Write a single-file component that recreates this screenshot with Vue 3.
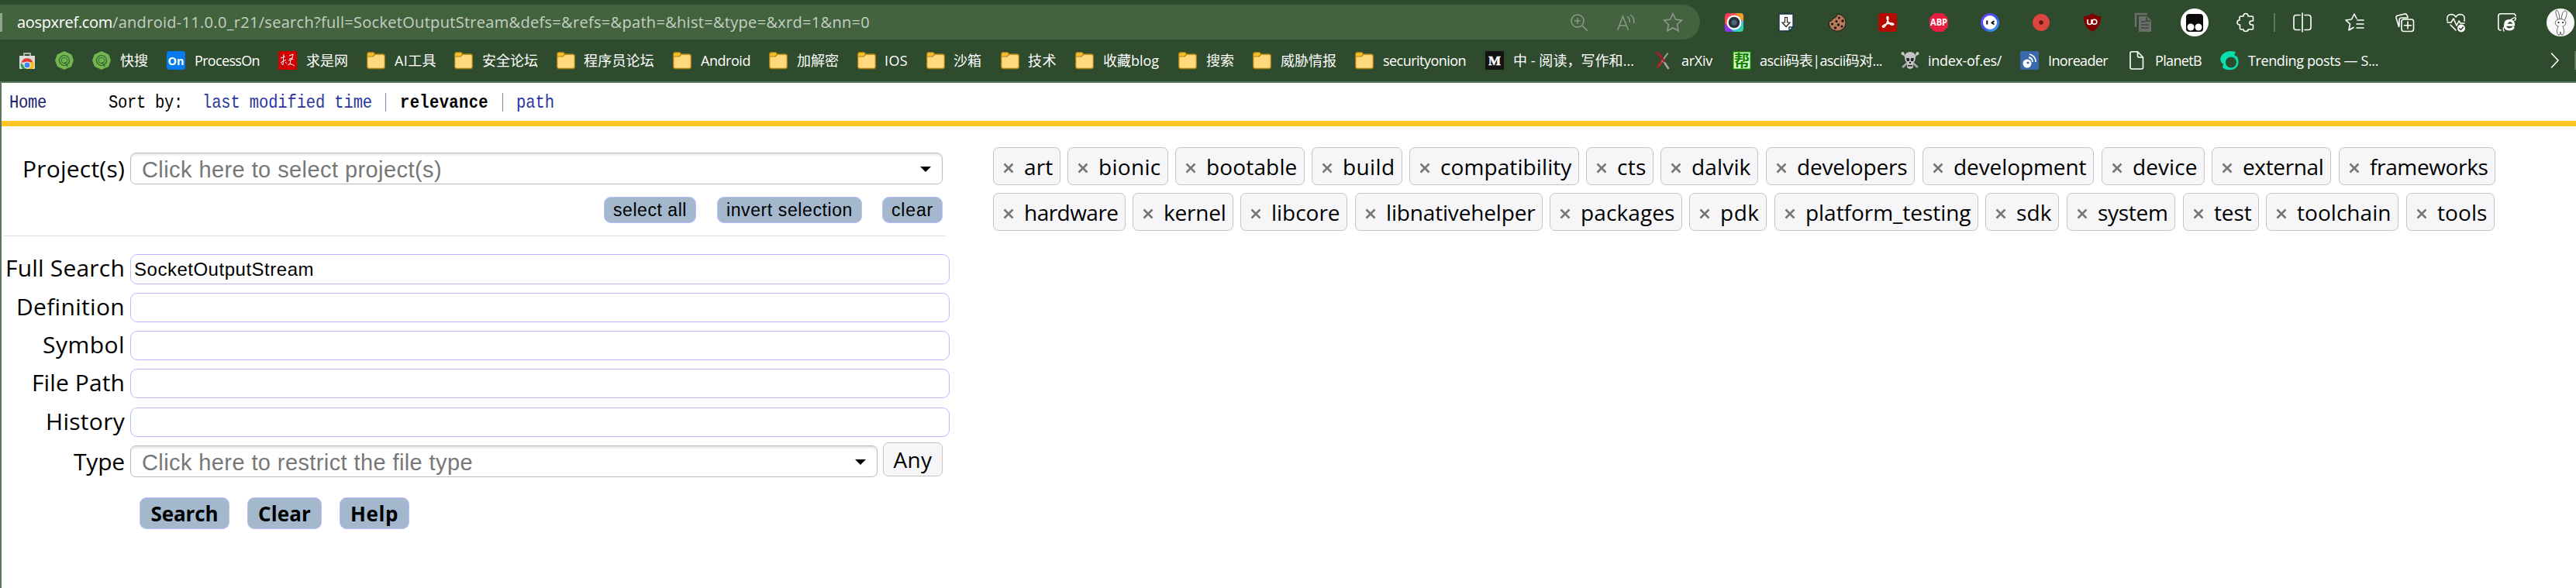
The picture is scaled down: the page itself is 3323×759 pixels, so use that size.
<script setup>
// Spreads the letters of a label so that it takes exactly the given width.
const vFit = {
  mounted(el, { value }) {
    const natural = el.getBoundingClientRect().width
    const count = el.textContent.trim().length
    el.style.letterSpacing = (value - natural) / count + 'px'
  },
}

// icon, x, icon width, label, label x, label width
const bookmarks = [
  ['store', 23, 24, '', 0, 0],
  ['green', 71, 24, '', 0, 0],
  ['green', 119, 24, '快搜', 155, 36],
  ['on', 215, 24, 'ProcessOn', 251, 84],
  ['qiushi', 359, 24, '求是网', 395, 54],
  ['folder', 473, 24, 'AI工具', 509, 54],
  ['folder', 586, 24, '安全论坛', 622, 72],
  ['folder', 718, 24, '程序员论坛', 753, 91],
  ['folder', 868, 24, 'Android', 904, 64],
  ['folder', 992, 24, '加解密', 1028, 54],
  ['folder', 1106, 24, 'IOS', 1141, 30],
  ['folder', 1195, 24, '沙箱', 1230, 36],
  ['folder', 1291, 24, '技术', 1326, 37],
  ['folder', 1387, 24, '收藏blog', 1423, 72],
  ['folder', 1520, 24, '搜索', 1556, 36],
  ['folder', 1616, 24, '威胁情报', 1652, 72],
  ['folder', 1748, 24, 'securityonion', 1784, 107],
  ['medium', 1916, 24, '中 - 阅读，写作和...', 1952, 156],
  ['arxiv', 2133, 24, 'arXiv', 2169, 40],
  ['bang', 2235, 24, 'ascii码表|ascii码对...', 2270, 158],
  ['skull', 2452, 24, 'index-of.es/', 2487, 95],
  ['ino', 2606, 24, 'Inoreader', 2642, 77],
  ['page', 2744, 24, 'PlanetB', 2780, 60],
  ['trend', 2864, 24, 'Trending posts — S...', 2900, 168],
].map((b, i, all) => {
  const prev = all[i - 1]
  const end = prev ? (prev[3] ? prev[4] + prev[5] : prev[1] + prev[2]) : 0
  return { icon: b[0], gap: b[1] - end, label: b[3], labelGap: b[4] - b[1] - b[2], width: b[5] }
})

const extensions = [
  ['lens', 2237], ['save', 2303.5], ['cookie', 2369.5], ['pdf', 2435], ['abp', 2500.5],
  ['face', 2567], ['record', 2633], ['ublock', 2698.5], ['copy', 2765], ['monkey', 2831],
  ['puzzle', 2897], ['sep', 2934], ['split', 2970], ['favs', 3037], ['collect', 3102],
  ['heart', 3168], ['ie', 3234], ['avatar', 3303],
].map(([icon, x], i, all) => {
  const half = (n) => (n === 'monkey' || n === 'avatar' ? 18 : 12)
  const prev = all[i - 1]
  const end = prev ? prev[1] + half(prev[0]) : 2193
  return { icon, gap: x - half(icon) - end, size: half(icon) * 2 }
})

const place = (row) => row.map(([name, x, right], i) => ({
  name,
  gap: i ? x - row[i - 1][2] : 0,
  width: right - x,
}))
const tagRows = [
  place([
    ['art', 1281, 1368], ['bionic', 1377, 1507], ['bootable', 1516, 1683], ['build', 1692, 1809],
    ['compatibility', 1818, 2037], ['cts', 2046, 2133], ['dalvik', 2142, 2268],
    ['developers', 2278, 2470], ['development', 2480, 2701], ['device', 2711, 2844],
    ['external', 2853, 3007], ['frameworks', 3017, 3219],
  ]),
  place([
    ['hardware', 1281, 1452], ['kernel', 1461, 1591], ['libcore', 1600, 1738],
    ['libnativehelper', 1748, 1990], ['packages', 1999, 2170], ['pdk', 2179, 2279],
    ['platform_testing', 2289, 2552], ['sdk', 2561, 2656], ['system', 2666, 2806],
    ['test', 2816, 2914], ['toolchain', 2923, 3094], ['tools', 3104, 3218],
  ]),
]

const fields = [
  { label: 'Full Search', width: 154, value: 'SocketOutputStream', cls: 'first' },
  { label: 'Definition', width: 140, value: '' },
  { label: 'Symbol', width: 106, value: '' },
  { label: 'File Path', width: 120, value: '' },
  { label: 'History', width: 102, value: '', cls: 'last' },
]
</script>

<template>
  <div class="window">
    <header class="chrome">
      <div class="toolbar">
        <div class="address">
          <i class="caret"></i>
          <div class="url">
            <span v-fit="123" class="domain">aospxref.com</span><span v-fit="977">/android-11.0.0_r21/search?full=SocketOutputStream&amp;defs=&amp;refs=&amp;path=&amp;hist=&amp;type=&amp;xrd=1&amp;nn=0</span>
          </div>
          <div class="tools">
            <svg width="24" height="24" viewBox="0 0 24 24"><circle cx="10" cy="10" r="8" /><path d="M16 16l7 7M6 10h8M10 6v8" /></svg>
            <svg width="24" height="24" viewBox="0 0 24 24"><path d="M1.500 22L8.500 4l7 18M4 16h9M14 4q4 3 3 8M18 2q6 4 4.500 11" /></svg>
            <svg width="26" height="26" viewBox="0 0 24 24"><path d="M12 1.500l3.200 6.800 7.300 1-5.300 5.200 1.300 7.500-6.500-3.600-6.500 3.600 1.300-7.500L1.500 9.300l7.300-1z" /></svg>
          </div>
        </div>
        <div class="extensions">
          <span v-for="e in extensions" :key="e.icon" class="ext" :style="{ marginLeft: e.gap + 'px', width: e.size + 'px' }">
            <svg v-if="e.icon === 'lens'" width="24" height="24" viewBox="0 0 24 24">
              <defs><linearGradient id="lensA" x1="0" y1="0" x2="1" y2="1"><stop offset="0" stop-color="#f02a72" /><stop offset=".3" stop-color="#ff5c3c" /><stop offset=".5" stop-color="#c45be0" /><stop offset=".75" stop-color="#25c9e8" /><stop offset="1" stop-color="#48dc60" /></linearGradient></defs>
              <rect width="24" height="24" rx="4" fill="url(#lensA)" /><path d="M14 0h6q4 0 4 4v7z" fill="#ff9a1c" /><path d="M0 13v7q0 4 4 4h7z" fill="#8a35e8" /><circle cx="12" cy="12" r="9.500" fill="#fff" /><circle cx="12" cy="12" r="7.300" fill="#26313b" /><circle cx="12" cy="12" r="3.500" fill="#4e6678" />
            </svg>
            <svg v-else-if="e.icon === 'save'" width="24" height="24" viewBox="0 0 24 24">
              <path d="M3 1h18v17l-5 5H3z" fill="#fff" stroke="#12344d" stroke-width="1.300" /><path d="M10.500 5.500h3v6.500h3.500l-5 5.500-5-5.500h3.500z" fill="#fff" stroke="#222" stroke-width="1.200" /><path d="M16 23v-5h5" fill="none" stroke="#12344d" stroke-width="1.400" />
            </svg>
            <svg v-else-if="e.icon === 'cookie'" width="24" height="24" viewBox="0 0 24 24">
              <path d="M12 1.200A11 11 0 1 1 1.200 10.500Q4 11 5.500 9 5 6.500 8 6.500 12 5 12 1.200z" fill="#b87a5b" stroke="#1b1512" stroke-width="1" /><g fill="#14100e"><circle cx="14.500" cy="6" r="1.500" /><circle cx="19" cy="10" r="1.700" /><circle cx="11" cy="10.500" r="1.500" /><circle cx="5.500" cy="14" r="1.500" /><circle cx="13.500" cy="15" r="1.700" /><circle cx="18" cy="17" r="1.500" /><circle cx="9.500" cy="19" r="1.700" /></g>
            </svg>
            <svg v-else-if="e.icon === 'pdf'" width="24" height="24" viewBox="0 0 24 24">
              <rect width="24" height="24" rx="4" fill="#b30b00" /><path d="M6 18q-2-1 3-3.500 4-2 9-1.500 3 1 1 2-3 1-6-4-3-5-1.500-6.500 2-.5 1 4-1.500 6-4.500 9-1 1-2 .5z" fill="none" stroke="#fff" stroke-width="1.600" />
            </svg>
            <svg v-else-if="e.icon === 'abp'" width="26" height="24" viewBox="0 0 26 24">
              <path d="M7.500 0h11L25 6.500v11L18.500 24h-11L1 17.500v-11z" fill="#e81e42" /><text x="13" y="16" text-anchor="middle" font-size="11.500" font-weight="700" fill="#fff" textLength="22" lengthAdjust="spacingAndGlyphs">ABP</text>
            </svg>
            <svg v-else-if="e.icon === 'face'" width="24" height="24" viewBox="0 0 24 24">
              <defs><linearGradient id="faceA" x1="0" y1="0" x2="1" y2="1"><stop offset="0" stop-color="#7a3ff2" /><stop offset=".55" stop-color="#3856f4" /><stop offset="1" stop-color="#39bff2" /></linearGradient></defs>
              <circle cx="12" cy="12" r="12" fill="url(#faceA)" /><circle cx="12" cy="12" r="9" fill="#fff" /><path d="M8.300 9.500v5M17.500 10L14.500 12.500l3 2" fill="none" stroke="#111" stroke-width="2" />
            </svg>
            <svg v-else-if="e.icon === 'record'" width="24" height="24" viewBox="0 0 24 24"><circle cx="12" cy="12" r="11" fill="#dc4440" /><circle cx="12" cy="12" r="2.700" fill="#5f1714" /></svg>
            <svg v-else-if="e.icon === 'ublock'" width="24" height="24" viewBox="0 0 24 24"><path d="M12 0q5 4 11 4 1 13-11 20Q0 17 1 4 7 4 12 0z" fill="#800000" /><path d="M6 8v4.500q0 2 2.500 2t2.500-2V8M11 8v6" fill="none" stroke="#fff" stroke-width="1.600" /><circle cx="14.800" cy="11.200" r="3" fill="none" stroke="#fff" stroke-width="1.600" /></svg>
            <svg v-else-if="e.icon === 'copy'" width="24" height="24" viewBox="0 0 24 24"><path d="M2 18V1h15" fill="none" stroke="#6c6c6c" stroke-width="2.500" /><path d="M6 4h11l5 5v15H6z" fill="#6c6c6c" /><path d="M9 11h6M9 15h10M9 19h10M16 5v5h5" fill="none" stroke="#34492f" stroke-width="1.500" /></svg>
            <svg v-else-if="e.icon === 'monkey'" width="36" height="36" viewBox="0 0 36 36"><circle cx="18" cy="18" r="18" fill="#fff" /><rect x="7" y="7" width="22" height="23" rx="4" fill="#0a0a0a" /><circle cx="13" cy="24" r="4.500" fill="#fff" /><circle cx="23" cy="24" r="4.500" fill="#fff" /></svg>
            <svg v-else-if="e.icon === 'puzzle'" class="line" width="24" height="24" viewBox="0 0 24 24"><path d="M5 4h4q0-3.500 3-3.500T15 4h5q1.500 0 1.500 1.500V10h-2q-2.500 0-2.500 2.500t2.500 2.500h2v4.500Q21.500 21 20 21h-5q0 2.500-3 2.500T9 21H6q-1.500 0-1.500-1.500V15Q1 15 1 12t3-3V5z" /></svg>
            <svg v-else-if="e.icon === 'sep'" width="24" height="24" viewBox="0 0 24 24"><path d="M12 0v24" stroke="#6e8770" stroke-width="1.500" /></svg>
            <svg v-else-if="e.icon === 'split'" class="line" width="24" height="24" viewBox="0 0 24 24"><path d="M9 2.500H4Q1 2.500 1 5.500v13q0 3 3 3h5M12 0v24M15 2.500h5q3 0 3 3v13q0 3-3 3h-5" /></svg>
            <svg v-else-if="e.icon === 'favs'" class="line" width="24" height="24" viewBox="0 0 24 24"><path d="M15 7l-3-6-3.500 7-7.500 1 5.500 5L5 22l6-3.500M16 9h8M15 14h9M15 19h9" /></svg>
            <svg v-else-if="e.icon === 'collect'" class="line" width="24" height="24" viewBox="0 0 24 24"><rect x="8" y="8" width="15.500" height="15.500" rx="3" /><path d="M16 11v9M11.500 15.700h9M4.500 17.500L1 6q-.5-2 1.500-2.700L12 1q2-.4 2.800 1.400L16 5M5 16.500V9q0-3 3-3h8" /></svg>
            <svg v-else-if="e.icon === 'heart'" class="line" width="24" height="24" viewBox="0 0 24 24"><path d="M1 10q-1.500-8 5-8.500 4 0 6 3.500 2-3.500 6-3.500 6.500.5 5 8.500M1 12h5l3-5 4 9 3-6 2 3h5M5 15l7 7" /><circle cx="19" cy="19.500" r="5" fill="#fff" stroke="none" /><path d="M16.500 19.500l2 2 3-3.500" stroke="#2e4b2d" /></svg>
            <svg v-else-if="e.icon === 'ie'" class="line" width="24" height="24" viewBox="0 0 24 24"><path d="M4 22Q.8 22 .8 19V4Q.8.8 4 .8h16q3 0 3 3" /><path d="M9.500 15.300h11.200q0-5.700-5.600-5.700T9.500 15.500q0 5.500 5.600 5.500 3.600 0 5-2.500" stroke-width="3" /><path d="M8 23q-3-3 5-11t10-6q1 1-1 3.500" stroke-width="1.500" /></svg>
            <svg v-else width="36" height="36" viewBox="0 0 36 36"><circle cx="18" cy="18" r="18" fill="#f7f7f7" /><g fill="#fff" stroke="#666" stroke-width="1"><path d="M15 15Q10 3 13 2q3 1 4 12M19 14q1-12 6-11 3 2-2 13" /><ellipse cx="18" cy="18.500" rx="6.800" ry="5" /><path d="M15 23q-3 8 0 11h2l1-4 1 4h2q3-3 0-11" /></g><circle cx="15.500" cy="18" r="1.100" fill="#111" /><circle cx="21" cy="18" r="1.100" fill="#111" /></svg>
          </span>
        </div>
      </div>

      <nav class="bookmarks">
        <span v-for="(b, i) in bookmarks" :key="i" class="bookmark" :style="{ marginLeft: b.gap + 'px' }">
          <svg v-if="b.icon === 'folder'" width="24" height="24" viewBox="0 0 24 24"><rect x=".7" y="4" width="22.600" height="18.500" rx="2.500" fill="#ffd97b" stroke="#ae8010" stroke-width="1.300" /><path d="M.7 7V4Q.7 1.700 3 1.700h5q1.300 0 1.800 1L11 4 8 7z" fill="#f6bf2c" stroke="#ae8010" stroke-width="1.200" /></svg>
          <svg v-else-if="b.icon === 'store'" width="24" height="24" viewBox="0 0 24 24"><path d="M8 7V3h8v4" fill="none" stroke="#b5b5b5" stroke-width="1.800" /><path d="M2 6h20v16q0 1-1 1H3q-1 0-1-1z" fill="#dcdcdc" /><path d="M4.500 14.500a8 8 0 0 1 15 0z" fill="#e33b2e" /><path d="M12 14.500h8.500Q22 19 19 23h-7z" fill="#fbc116" /><path d="M4 15q-1.500 4 2 8h6z" fill="#2ba24c" /><circle cx="12" cy="18" r="4.500" fill="#fff" /><circle cx="12" cy="18" r="3.600" fill="#4285f4" /></svg>
          <svg v-else-if="b.icon === 'green'" width="24" height="24" viewBox="0 0 24 24"><path d="M12 0l9.500 4.500L24 12l-3 8-9 4-9-4-3-8 2.500-7.500z" fill="#72b552" /><circle cx="12" cy="12" r="6.500" fill="none" stroke="#2f5d2a" stroke-width="1.200" /><circle cx="12" cy="12" r="3.800" fill="none" stroke="#2f5d2a" stroke-width=".9" /><path d="M12.500 14l4 6" stroke="#2f5d2a" stroke-width="1.200" /></svg>
          <svg v-else-if="b.icon === 'on'" width="24" height="24" viewBox="0 0 24 24"><rect width="24" height="24" rx="3" fill="#067bef" /><text x="12" y="17.500" text-anchor="middle" font-size="15" font-weight="700" fill="#fff" textLength="21" lengthAdjust="spacingAndGlyphs">On</text></svg>
          <svg v-else-if="b.icon === 'qiushi'" width="24" height="24" viewBox="0 0 24 24"><rect width="24" height="24" fill="#d00000" /><path d="M3 9l6-2M7 4L6 18l-2-2M3 15l7-4M9 14l2 2M14 6l5-2-1 5-4 1M13 12l6-2M16 11l-1 6M12 18q4-3 9 1" fill="none" stroke="#fff" stroke-width="1" /></svg>
          <svg v-else-if="b.icon === 'medium'" width="24" height="24" viewBox="0 0 24 24"><rect width="24" height="24" fill="#121212" /><text class="serif" x="12" y="17.500" text-anchor="middle" font-size="17" font-weight="700" fill="#fff" stroke="#fff" stroke-width=".5">M</text></svg>
          <svg v-else-if="b.icon === 'arxiv'" width="24" height="24" viewBox="0 0 24 24"><path d="M18.500 2.500L6 20" stroke="#aaa69e" stroke-width="2" /><path d="M13 13l6.500 10" stroke="#aaa69e" stroke-width="2.500" /><path d="M4.500 1l10 13M10 13L5 21" stroke="#bd1723" stroke-width="2.500" /></svg>
          <svg v-else-if="b.icon === 'bang'" width="24" height="24" viewBox="0 0 24 24"><rect x="0" width="24" height="24" fill="#108000" /><rect x="1.500" y="1.500" width="21" height="21" fill="#dcffce" /><text x="12" y="19.500" text-anchor="middle" font-size="20" font-weight="700" fill="#108000">帮</text></svg>
          <svg v-else-if="b.icon === 'skull'" width="24" height="24" viewBox="0 0 24 24"><path d="M2 3l20 18M22 3L2 21" stroke="#a9a9a9" stroke-width="2.500" /><circle cx="2.500" cy="3" r="2" fill="#ccc" /><circle cx="21.500" cy="3" r="2" fill="#ccc" /><path d="M12 1q7 0 7 7 0 5-3 7v6q-4 4-8 0v-6q-3-2-3-7 0-7 7-7z" fill="#c2c2c2" /><path d="M7 9h4v4H8zM13 9h4l-1 4h-3zM11 14h2v2h-2zM9 18h6v1.500H9z" fill="#242424" /></svg>
          <svg v-else-if="b.icon === 'ino'" width="24" height="24" viewBox="0 0 24 24"><rect width="24" height="24" rx="2.500" fill="#3a68ad" /><circle cx="9" cy="16" r="5.500" fill="#fff" /><circle cx="10" cy="15" r="1.600" fill="#3a68ad" /><path d="M11 8q5 1 5 6M12 4q8 2 8 10" fill="none" stroke="#fff" stroke-width="1.800" /></svg>
          <svg v-else-if="b.icon === 'page'" class="line" width="24" height="24" viewBox="0 0 24 24"><path d="M6 .8h7.500L20.500 8v13q0 2-2 2H6q-2 0-2-2V2.800q0-2 2-2zM13.500.8V6q0 2 2 2h5" /></svg>
          <svg v-else width="24" height="24" viewBox="0 0 24 24"><path d="M20 1Q10-2 3 4-2 10 2 15l2 2-1 4q3 3 6 3 6 1 11-2 5-5 3-12-1-4-5-5z" fill="#07deae" /><ellipse cx="14" cy="14.500" rx="7" ry="7" fill="#2e4b2d" /></svg>
          <span v-if="b.label" class="slot" :style="{ marginLeft: b.labelGap + 'px', width: b.width + 'px' }"><span v-fit="b.width">{{ b.label }}</span></span>
        </span>
        <svg class="more line" width="12" height="22" viewBox="0 0 12 22"><path d="M1.500 2l8.500 9-8.500 9" /></svg>
        <i class="edge"></i>
      </nav>
    </header>

    <main class="page">
      <div class="sortbar">
        <a v-fit="48" class="home">Home</a>
        <span v-fit="96" class="by">Sort by:</span>
        <a v-fit="219" class="modified">last modified time</a>
        <i class="bar"></i>
        <b v-fit="114">relevance</b>
        <i class="bar second"></i>
        <a v-fit="49">path</a>
      </div>

      <div class="content">
        <form class="form">
          <div class="row project">
            <label><span v-fit="132">Project(s)</span></label>
            <div class="select"><span v-fit="387">Click here to select project(s)</span><i class="arrow"></i></div>
          </div>
          <div class="actions">
            <span class="btn all"><span v-fit="95">select all</span></span>
            <span class="btn invert"><span v-fit="163">invert selection</span></span>
            <span class="btn clear"><span v-fit="54">clear</span></span>
          </div>
          <div class="rule"></div>
          <div v-for="f in fields" :key="f.label" class="row field" :class="f.cls">
            <label><span v-fit="f.width">{{ f.label }}</span></label>
            <div class="input"><span v-if="f.value" v-fit="232">{{ f.value }}</span></div>
          </div>
          <div class="row type">
            <label><span v-fit="66">Type</span></label>
            <div class="select"><span v-fit="427">Click here to restrict the file type</span><i class="arrow"></i></div>
            <span class="any"><span v-fit="50">Any</span></span>
          </div>
          <div class="submit">
            <span class="btn search"><span v-fit="87">Search</span></span>
            <span class="btn reset"><span v-fit="68">Clear</span></span>
            <span class="btn help"><span v-fit="62">Help</span></span>
          </div>
        </form>

        <div class="tags">
          <div v-for="(row, r) in tagRows" :key="r" class="tag-row">
            <span v-for="t in row" :key="t.name" class="tag" :style="{ marginLeft: t.gap + 'px', width: t.width + 'px' }">
              <svg width="14" height="14" viewBox="0 0 14 14"><path d="M1.500 1.500l11 11M12.500 1.500l-11 11" /></svg>
              <span v-fit="t.width - 49.500">{{ t.name }}</span>
            </span>
          </div>
        </div>
      </div>
    </main>
  </div>
</template>

<style>
body { margin: 0; background: #fff; }
</style>

<style scoped>
* { box-sizing: border-box; }
.window {
  width: 3323px;
  height: 759px;
  overflow: hidden;
  display: flex;
  flex-direction: column;
  font-family: "Open Sans", "Noto Sans CJK SC", sans-serif;
  background: #fff;
}
span, a, b, label { white-space: nowrap; }
svg { display: block; flex: none; overflow: visible; }
.chrome { height: 107px; flex: none; background: #2e4b2d; border-bottom: 2px solid #5c775b; }
.toolbar { height: 57px; display: flex; align-items: center; }
.address {
  width: 2193px;
  height: 45px;
  display: flex;
  align-items: center;
  background: #43633f;
  border-radius: 0 23px 23px 0;
  color: #c5cfc4;
}
.caret { width: 3px; height: 24px; background: #91a38f; }
.url { width: 2003px; padding-left: 19px; font-size: 20px; line-height: 28px; height: 28px; display: flex; }
.domain { color: #fff; }
.tools { display: flex; align-items: center; margin-left: 19px; gap: 36px; }
.tools svg { fill: none; stroke: #8f968e; stroke-width: 1.5; }
.extensions { display: flex; align-items: center; flex: none; height: 57px; }
.ext { display: flex; justify-content: center; flex: none; }
.line { fill: none; stroke: #fff; stroke-width: 1.6; stroke-linecap: round; stroke-linejoin: round; }
.bookmarks { height: 42px; display: flex; align-items: center; color: #fff; font-size: 18px; line-height: 24px; }
.bookmark { display: flex; align-items: center; flex: none; }
.slot { display: block; height: 24px; }
.slot > span { display: inline-block; }
.serif { font-family: "Liberation Serif", serif; }
.more { margin-left: auto; }
.edge { width: 2px; height: 24px; margin-left: 19px; background: #5c775b; }

.page { flex: 1; border-left: 2px solid #5c775b; }
.sortbar {
  height: 56px;
  display: flex;
  align-items: center;
  border-bottom: 7px solid #ffc527;
  font-family: "Liberation Mono", monospace;
  font-size: 20.5px;
  line-height: 28px;
}
.sortbar a, .sortbar b, .by { flex: none; padding-top: 3px; transform: scaleY(1.15); }
.sortbar a { color: #2c35a0; }
.sortbar .home { margin-left: 10px; color: #20206c; }
.by { margin-left: 80px; }
.modified { margin-left: 25px; }
.bar { width: 1px; height: 24px; margin: 0 18px 0 17px; background: #8088a8; }
.bar.second { margin: 0 17px 0 18px; }

.content { display: flex; align-items: flex-start; }
.form { width: 1224px; padding-top: 34px; flex: none; }
.row { display: flex; align-items: stretch; }
label {
  width: 159px;
  margin-right: 7px;
  display: flex;
  justify-content: flex-end;
  align-items: center;
  font-size: 30px;
  line-height: 36px;
}
.select {
  width: 1048px;
  height: 41px;
  padding: 2px 14px 0 14px;
  display: flex;
  align-items: center;
  justify-content: space-between;
  border: 1px solid #bbb;
  border-radius: 7px;
  box-shadow: inset 0 3px 3px -1px #e2e2e2;
  color: #777;
  font-family: "Liberation Sans", sans-serif;
  font-size: 29px;
  line-height: 36px;
}
.arrow { border: 7px solid transparent; border-top-color: #000; border-bottom: 0; }
.actions {
  display: flex;
  justify-content: flex-end;
  margin: 16px 10px 0 0;
  font-family: "Liberation Sans", sans-serif;
  font-size: 23px;
}
.btn {
  display: flex;
  align-items: center;
  justify-content: center;
  background: #a3b8cc;
  border: 1px solid #bbf;
  border-radius: 9px;
  line-height: 30px;
}
.actions .btn { height: 34px; }
.all { width: 119px; }
.invert { width: 187px; margin-left: 27px; }
.clear { width: 78px; margin-left: 26px; }
.rule { margin: 16px 6px 0 3px; height: 1px; background: #ddd; }
.field { height: 38px; margin-top: 11px; }
.field.first { height: 39px; margin-top: 23px; }
.field.last { margin-top: 12px; }
.field label { padding-bottom: 3px; }
.input {
  width: 1057px;
  padding: 0 0 0 4px;
  display: flex;
  align-items: center;
  border: 1px solid #bbf;
  border-radius: 9px;
  font-family: "Liberation Sans", sans-serif;
  font-size: 24px;
}
.type { margin-top: 11px; }
.type .select { width: 964px; }
.any {
  width: 77px;
  height: 44px;
  margin: -4px 0 0 7px;
  display: flex;
  align-items: center;
  justify-content: center;
  background: #f6f6f9;
  border: 1px solid #c4c4c4;
  border-radius: 7px;
  font-size: 28px;
  line-height: 40px;
}
.submit { display: flex; margin: 26px 0 0 178px; font-size: 26px; font-weight: 700; }
.submit .btn { height: 41px; }
.search { width: 116px; }
.reset { width: 96px; margin-left: 23px; }
.help { width: 90px; margin-left: 23px; }

.tags { padding: 27px 0 0 55px; }
.tag-row { display: flex; margin-bottom: 10px; }
.tag {
  height: 49px;
  padding: 0 0 0 12px;
  display: flex;
  align-items: center;
  flex: none;
  gap: 13px;
  background: #f6f6f9;
  border: 1px solid #c4c4c4;
  border-radius: 7px;
  font-size: 28px;
  line-height: 40px;
}
.tag svg { fill: none; stroke: #777; stroke-width: 2.6; margin-top: 5px; }
</style>
